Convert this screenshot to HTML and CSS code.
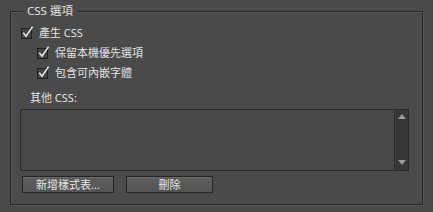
FILE: index.html
```html
<!DOCTYPE html>
<html>
<head>
<meta charset="utf-8">
<link rel="stylesheet" href="styles.css">
</head>
<body>
<div class="panel">
  <div class="legend">CSS 選項</div>
  <div class="row level1">
    <svg class="cb" width="13" height="13" viewBox="0 0 13 13"><rect x="0.5" y="2.5" width="10" height="10" fill="#444" stroke="#1f1f1f"/><path d="M2.3 6.8 L5 10.2 L11.6 0.6" fill="none" stroke="#ececec" stroke-width="1.5"/></svg>
    <span>產生 CSS</span>
  </div>
  <div class="row level2">
    <svg class="cb" width="13" height="13" viewBox="0 0 13 13"><rect x="0.5" y="2.5" width="10" height="10" fill="#444" stroke="#1f1f1f"/><path d="M2.3 6.8 L5 10.2 L11.6 0.6" fill="none" stroke="#ececec" stroke-width="1.5"/></svg>
    <span>保留本機優先選項</span>
  </div>
  <div class="row level2">
    <svg class="cb" width="13" height="13" viewBox="0 0 13 13"><rect x="0.5" y="2.5" width="10" height="10" fill="#444" stroke="#1f1f1f"/><path d="M2.3 6.8 L5 10.2 L11.6 0.6" fill="none" stroke="#ececec" stroke-width="1.5"/></svg>
    <span>包含可內嵌字體</span>
  </div>
  <div class="label">其他 CSS:</div>
  <div class="textarea">
    <div class="text-body"></div>
    <div class="scrollbar">
      <svg width="8" height="6" viewBox="0 0 8 6"><path d="M0 5 L4 0 L8 5 Z" fill="#9a9a9a"/></svg>
      <svg width="8" height="6" viewBox="0 0 8 6"><path d="M0 0 L8 0 L4 5 Z" fill="#9a9a9a"/></svg>
    </div>
  </div>
  <div class="buttons">
    <div class="btn btn-add">新增樣式表...</div>
    <div class="btn btn-del">刪除</div>
  </div>
</div>
</body>
</html>
```
FILE: styles.css
```css
html, body {
  margin: 0;
  padding: 0;
  background: #4a4a4a;
  width: 433px;
  height: 212px;
  overflow: hidden;
  font-family: "Noto Sans", "Noto Sans CJK TC", sans-serif;
  font-size: 11px;
  color: #e2e2e2;
}
.panel {
  position: relative;
  margin: 11px 10px 0 10px;
  height: 194px;
  box-sizing: border-box;
  border: 1px solid #262626;
  box-shadow: inset 1px 1px 0 #555, 1px 1px 0 #555;
  padding: 10px 13px 0 9px;
}
.legend {
  position: absolute;
  top: -9px;
  left: 12px;
  padding: 0 4px;
  background: #4a4a4a;
  line-height: 16px;
  font-size: 11.5px;
}
.row {
  display: flex;
  align-items: center;
  height: 20px;
  gap: 5px;
}
.cb { display: block; flex: none; }
.level1 { margin-left: 1px; }
.level2 { margin-left: 17px; }
.label {
  margin-top: 8px;
  margin-left: 10px;
  height: 16px;
  line-height: 16px;
}
.textarea {
  margin-top: 3px;
  height: 62px;
  box-sizing: border-box;
  border: 1px solid #2a2a2a;
  background: #474747;
  display: flex;
}
.text-body { flex: 1; }
.scrollbar {
  width: 13px;
  background: #363636;
  border-left: 1px solid #2c2c2c;
  box-shadow: inset 1px 0 0 #3e3e3e;
  display: flex;
  flex-direction: column;
  justify-content: space-between;
  align-items: center;
  padding: 4px 0 4px;
}
.scrollbar svg { display: block; }
.buttons {
  margin-top: 5px;
  margin-left: 2px;
  display: flex;
  gap: 12px;
}
.btn {
  height: 17px;
  box-sizing: border-box;
  border: 1px solid #252525;
  background: linear-gradient(#5e5e5e, #545454);
  box-shadow: inset 0 1px 0 #676767;
  text-align: center;
  line-height: 15px;
  color: #e6e6e6;
}
.btn-add { width: 92px; }
.btn-del { width: 87px; }
```
